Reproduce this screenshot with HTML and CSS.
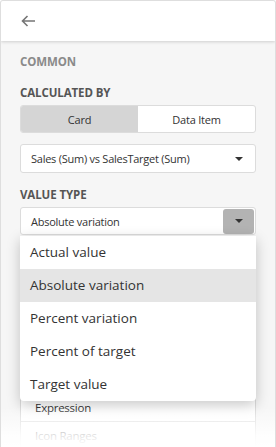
FILE: index.html
```html
<!DOCTYPE html>
<html lang="en">

<head>
  <meta charset="UTF-8">
  <meta name="viewport" content="width=device-width, initial-scale=1.0">
  <title>Card options</title>
  <link rel="stylesheet" href="styles.css">
</head>

<body>
  <div class="panel">
    <div class="header">
      <svg class="back" width="16" height="16" viewBox="0 0 16 16">
        <path d="M15 8H2.5M7.5 3L2.5 8l5 5" fill="none" stroke="#757575" stroke-width="1.6" />
      </svg>
    </div>

    <div class="content">
      <div class="group-title">COMMON</div>

      <div class="label">CALCULATED BY</div>
      <div class="segmented">
        <div class="segment active">Card</div>
        <div class="segment">Data Item</div>
      </div>

      <div class="select">
        <span class="select-text">Sales (Sum) vs SalesTarget (Sum)</span>
        <span class="caret"></span>
      </div>

      <div class="label">VALUE TYPE</div>
      <div class="select open">
        <span class="select-text">Absolute variation</span>
        <span class="select-btn"><span class="caret"></span></span>

        <ul class="popup">
          <li>Actual value</li>
          <li class="hover">Absolute variation</li>
          <li>Percent variation</li>
          <li>Percent of target</li>
          <li>Target value</li>
        </ul>
      </div>

      <!-- rest of the list sits under the popup -->
      <ul class="list">
        <li>Expression</li>
        <li>Icon Ranges</li>
      </ul>
    </div>

    <div class="fade"></div>
  </div>
</body>

</html>
```

FILE: styles.css
```css
body {
  margin: 0;
  font-family: "Open Sans", "Noto Sans", sans-serif;
  color: #333;
  background: #fff;
}

.panel {
  position: relative;
  height: 447px;
  box-sizing: border-box;
  border: 1px solid #dedede;
  border-bottom: none;
  border-radius: 3px 3px 0 0;
  background: #f6f6f6;
  overflow: hidden;
}

.header {
  height: 40px;
  background: #fff;
  display: flex;
  align-items: center;
  padding-left: 19px;
  box-shadow: 0 1px 3px rgba(0, 0, 0, 0.16);
  position: relative;
}

.back {
  display: block;
}

.content {
  padding: 13px 19px 0;
}

.group-title,
.label {
  font-size: 11.5px;
  line-height: 16px;
  font-weight: 700;
  letter-spacing: -0.1px;
}

.group-title {
  color: #8a8a8a;
  margin-bottom: 15px;
}

.label {
  color: #555;
  margin-bottom: 4px;
}

.segmented {
  display: flex;
  height: 28px;
  border: 1px solid #dcdcdc;
  border-radius: 3px;
  overflow: hidden;
  background: #fff;
  box-sizing: border-box;
}

.segment {
  flex: 1;
  display: flex;
  align-items: center;
  justify-content: center;
  font-size: 11px;
  letter-spacing: -0.2px;
}

.segment.active {
  background: #d5d5d5;
}

.select {
  position: relative;
  display: flex;
  align-items: center;
  height: 29px;
  box-sizing: border-box;
  margin-top: 11px;
  margin-bottom: 14px;
  padding: 0 12px 0 10px;
  background: #fff;
  border: 1px solid #dcdcdc;
  border-radius: 3px;
  font-size: 11px;
  letter-spacing: -0.25px;
}

.select.open {
  height: 28px;
  margin-top: 0;
  margin-bottom: 0;
  padding-right: 1px;
}

.select-text {
  flex: 1;
}

.caret {
  width: 0;
  height: 0;
  border-left: 4px solid transparent;
  border-right: 4px solid transparent;
  border-top: 4px solid #333;
}

.select-btn {
  width: 31px;
  height: 25px;
  background: #b3b3b3;
  border-radius: 3px;
  display: flex;
  align-items: center;
  justify-content: center;
}

.popup {
  position: absolute;
  top: 28px;
  left: -1px;
  right: -1px;
  margin: 0;
  padding: 0;
  list-style: none;
  background: #fff;
  border-radius: 0 0 4px 4px;
  box-shadow: 0 4px 14px rgba(0, 0, 0, 0.22);
  z-index: 2;
  letter-spacing: 0;
}

.popup li {
  height: 33px;
  line-height: 33px;
  padding-left: 10px;
  font-size: 13.5px;
  color: #333;
}

.popup li.hover {
  background: #e5e5e5;
}

.list {
  margin: 158px 0 0;
  padding: 0;
  list-style: none;
  background: #fff;
  border: 1px solid #dcdcdc;
  border-radius: 3px;
}

.list li {
  height: 28px;
  line-height: 27px;
  padding-left: 14px;
  font-size: 11.5px;
  letter-spacing: -0.25px;
  border-bottom: 1px solid #e0e0e0;
  box-sizing: border-box;
}

.fade {
  position: absolute;
  left: 0;
  right: 0;
  bottom: 0;
  height: 40px;
  background: linear-gradient(rgba(255, 255, 255, 0), rgba(255, 255, 255, 0.85) 70%, #fff);
  z-index: 3;
}
```
